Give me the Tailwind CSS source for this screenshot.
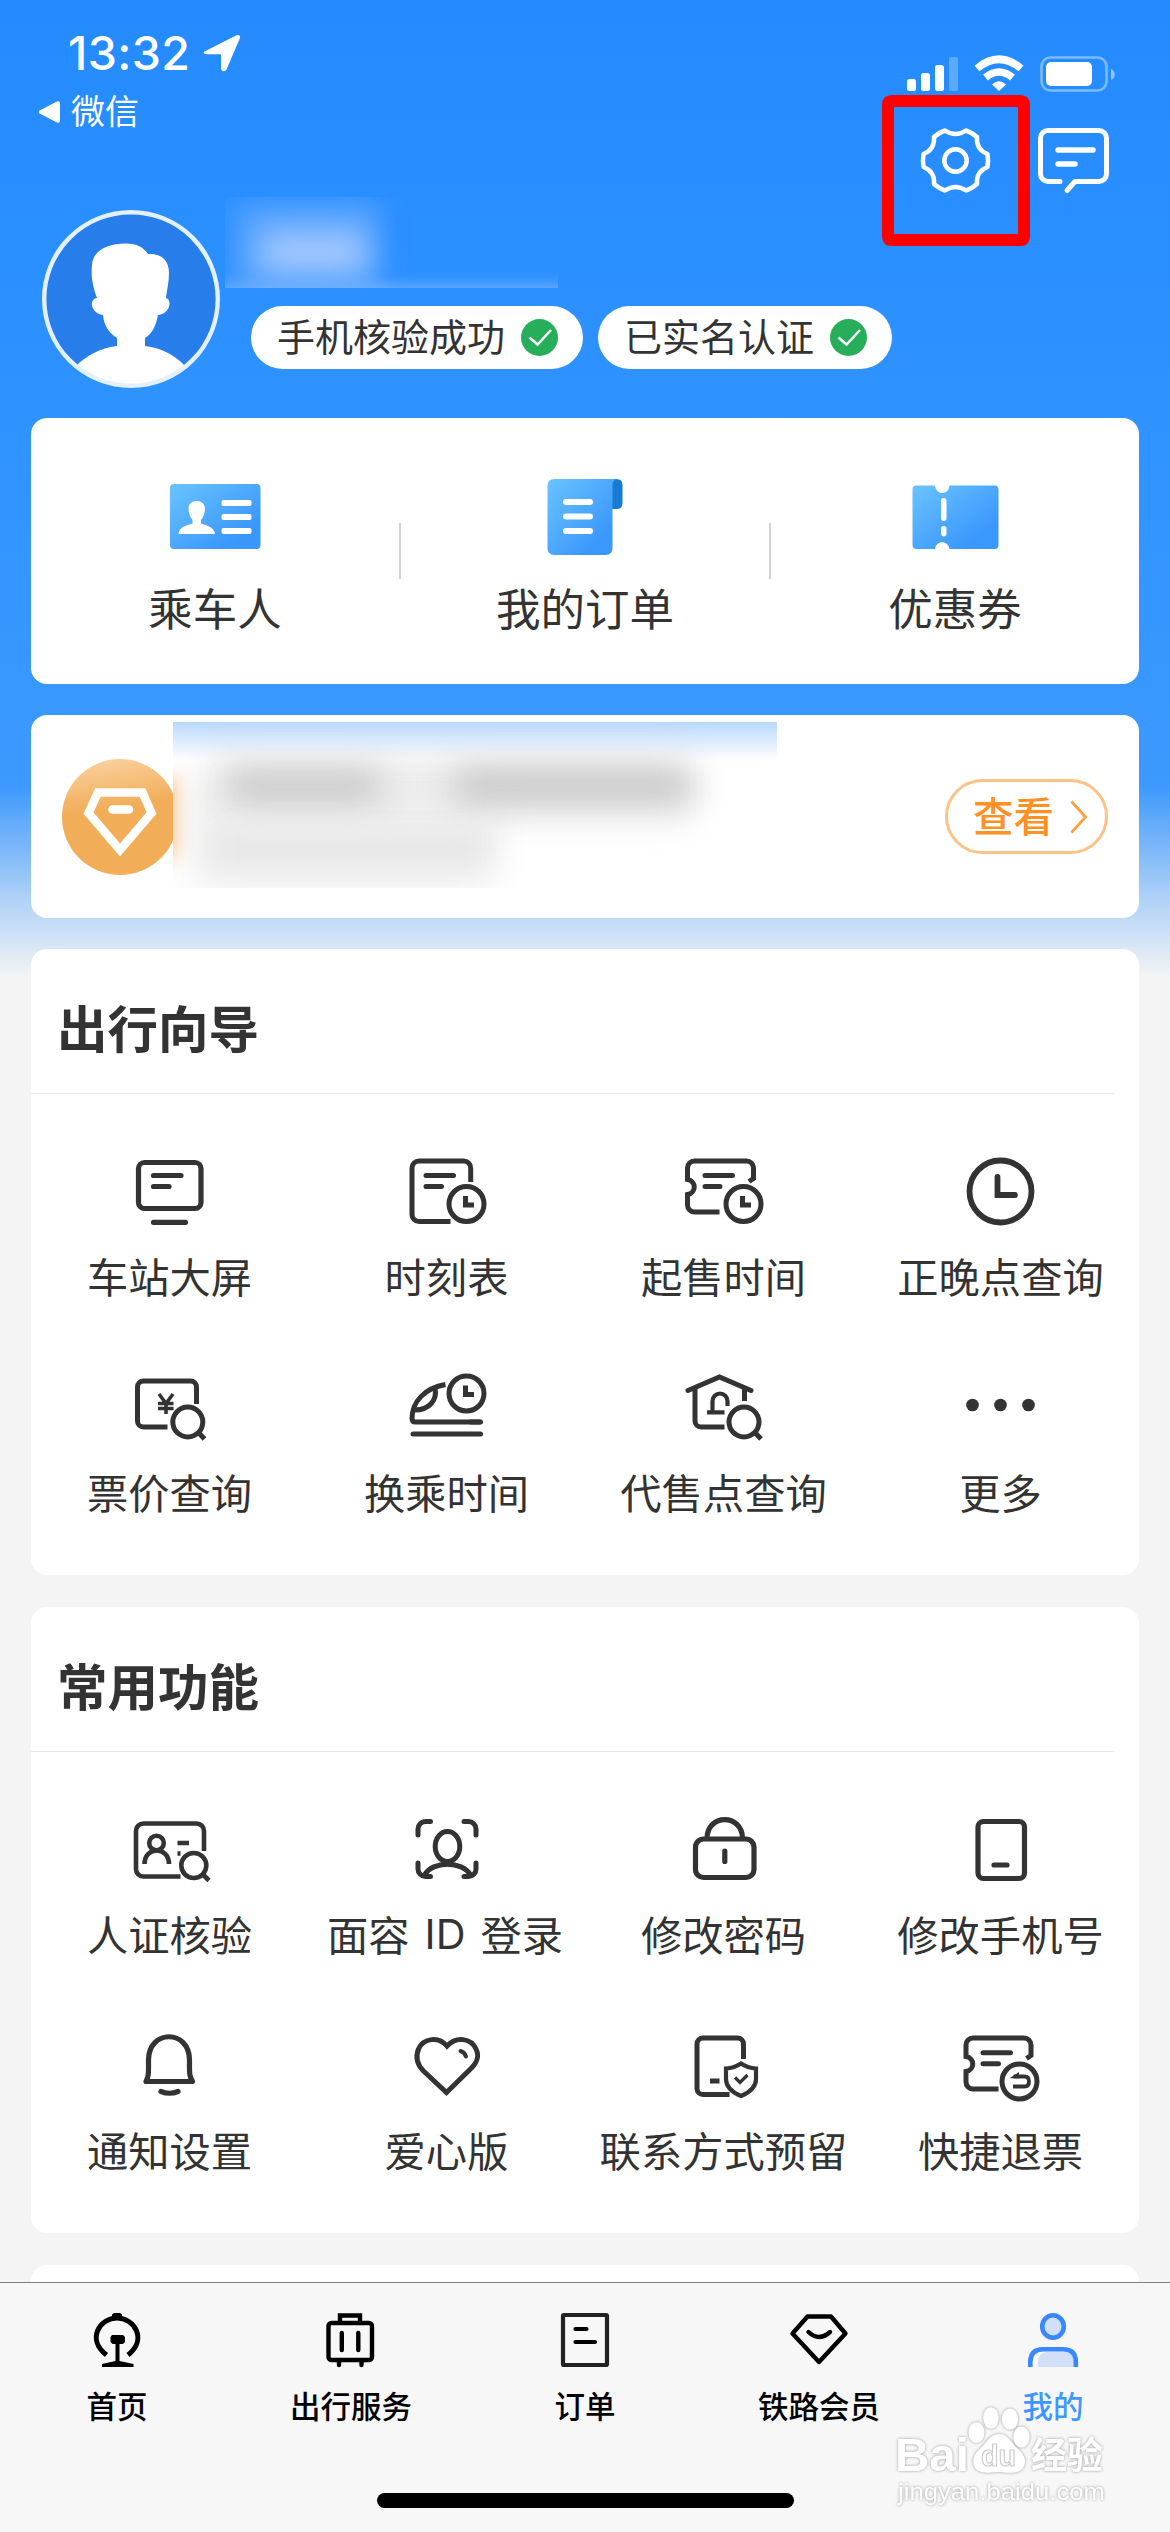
<!DOCTYPE html>
<html lang="zh-CN">
<head>
<meta charset="utf-8">
<title>我的</title>
<script src="https://cdn.jsdelivr.net/npm/@tailwindcss/browser@4"></script>
</head>
<body class="bg-[#f4f4f4]">
<div class="relative w-[1170px] h-[2532px] overflow-hidden flex flex-col bg-[#f4f4f4] text-[#333] font-['Noto_Sans_CJK_SC',sans-serif] bg-[linear-gradient(180deg,#248bff_0px,#2e92ff_400px,#3998ff_700px,#3c99fd_785px,#79b6f9_845px,#b0d2f7_900px,#d8e6f6_946px,#e1eaf4_955px,#f4f4f4_977px)]">

  <!-- status bar -->
  <div class="h-[134px] shrink-0 flex justify-between">
    <div class="pl-[38px] pt-[25px] text-white">
      <div class="flex items-center h-[56px] pl-[30px]">
        <span class="font-['Inter',sans-serif] font-medium text-[46.500px] leading-[56px] w-[135px] tracking-[0.4px]">13:32</span>
        <svg class="w-[38px] h-[38px]" viewBox="0 0 38 38" fill="#fff"><path d="M2.5 17 33.5 1.3c2.2-1 4.3.7 3.3 3.2L23.500 35.500c-1.200 2.700-5.500 2.200-5.500-1.200V21.500c0-.8-.4-1.200-1.200-1.200H3.500c-3.400 0-3.600-2.200-1-3.300z"/></svg>
      </div>
      <div class="flex items-center h-[40px] mt-[11px]">
        <svg class="w-[22px] h-[24px]" viewBox="0 0 22 24" fill="#fff"><path d="M1.500 10.500 19 1.500q3-1 3 2v17q0 3-3 2L1.500 13.500q-1.500-1.500 0-3z"/></svg>
        <span class="text-[34px] leading-[40px] ml-[11px] -mt-[4px]">微信</span>
      </div>
    </div>
    <svg class="w-[220px] h-[50px] mt-[50px] mr-[45px]" viewBox="905 50 220 50" fill="#fff">
      <rect x="907" y="79" width="9" height="12" rx="2.500"/><rect x="921" y="73" width="9" height="18" rx="2.500"/><rect x="935" y="65" width="9" height="26" rx="2.500"/><rect x="949" y="57" width="9" height="34" rx="2.500" opacity=".25"/>
      <g fill="none" stroke="#fff" stroke-width="7.500"><path d="M977 68.500Q999 50 1021 68.500"/><path d="M985.500 77.500Q999 66.500 1012.500 77.500"/></g>
      <path d="M992 84.500q7-6.500 14 0L999 91z"/>
      <rect x="1041.500" y="57.500" width="65" height="33" rx="9" fill="none" stroke="#fff" stroke-width="2.600" opacity=".4"/>
      <rect x="1046" y="62" width="46" height="24" rx="5"/><path d="M1111 69c5 2 5 9 0 11z" opacity=".5"/>
    </svg>
  </div>

  <!-- profile -->
  <div class="h-[284px] shrink-0 flex pl-[42px]">
    <svg class="w-[178px] h-[178px] mt-[76px] shrink-0" viewBox="42 210 178 178">
      <defs><clipPath id="av"><circle cx="131" cy="299" r="87"/></clipPath></defs>
      <circle cx="131" cy="299" r="87" fill="#277de9"/>
      <path clip-path="url(#av)" d="M97 298C92 285 91 275 92 265C93 250 108 243.500 126 243.500C137 243.500 143 247 148 254C160 253.500 169 259 169 273C169 282 167 289 166 298C172 299 171 314 158 315C156 326 152 334 145 338V346C162 348 176 356 185 366C180 384 150 390 131 390S82 384 76 366C86 356 100 348 117 346V338C109 333 104 326 103 315C90 313 89 299 97 298z" fill="#fff"/>
      <circle cx="131" cy="299" r="86.800" fill="none" stroke="#e3f0ff" stroke-width="4.400"/>
    </svg>
    <div class="flex-1 pt-[172px] pl-[31px] flex gap-[15px] items-start">
      <div class="h-[63px] w-[332px] rounded-full bg-white flex items-center pl-[26px]">
        <span class="text-[38px] leading-[54px] -mt-[5px] w-[244px]">手机核验成功</span>
        <svg class="w-[37px] h-[37px]" viewBox="0 0 37 37"><circle cx="18.500" cy="18.500" r="18.500" fill="#27ae5a"/><path d="M8.500 18.500 16.500 25.500 30 11" fill="none" stroke="#fff" stroke-width="2.400"/></svg>
      </div>
      <div class="h-[63px] w-[294px] rounded-full bg-white flex items-center pl-[26px]">
        <span class="text-[38px] leading-[54px] -mt-[5px] w-[206px]">已实名认证</span>
        <svg class="w-[37px] h-[37px]" viewBox="0 0 37 37"><circle cx="18.500" cy="18.500" r="18.500" fill="#27ae5a"/><path d="M8.500 18.500 16.500 25.500 30 11" fill="none" stroke="#fff" stroke-width="2.400"/></svg>
      </div>
    </div>
  </div>

  <!-- settings and message buttons -->
  <svg class="absolute left-[880px] top-[90px] w-[240px] h-[160px]" viewBox="880 90 240 160" fill="none" stroke="#fff" stroke-width="4.500" stroke-linecap="round" stroke-linejoin="round">
    <path d="M892 95H1020q10 0 10 10V236q0 10-10 10H892q-10 0-10-10V105q0-10 10-10zM894 107V234H1018V107z" fill="#f00" fill-rule="evenodd" stroke="none"/>
    <path d="M945 130.500Q955.500 137.500 966 130.500Q972 132.500 977 137Q976 149.500 987.500 154Q988.500 160.500 987.500 167Q976 171.500 977 184Q972 188.500 966 190.500Q955.500 183.500 945 190.500Q939 188.500 934 184Q935 171.500 923.500 167Q922.500 160.500 923.500 154Q935 149.500 934 137Q939 132.500 945 130.500z"/>
    <circle cx="955.500" cy="160.500" r="11.200"/>
    <path d="M1060 181.500H1048a7.500 7.500 0 0 1-7.500-7.500V138a7.500 7.500 0 0 1 7.500-7.500H1099a7.500 7.500 0 0 1 7.500 7.500V174a7.500 7.500 0 0 1-7.500 7.500H1075L1067 190.500" stroke-width="5"/>
    <path d="M1058 150H1093M1058 164H1075" stroke-width="5.500"/>
  </svg>

  <!-- obscured user name -->
  <div class="absolute left-[225px] top-[197px] w-[333px] h-[91px] overflow-hidden">
    <div class="absolute left-[10px] top-[5px] w-[145px] h-[95px] bg-[#6aabff]/70 blur-[14px]"></div>
    <div class="absolute left-[36px] top-[34px] w-[104px] h-[42px] bg-[#a3c8ff] blur-[15px]"></div>
    <div class="absolute left-[-10px] top-[90px] w-[370px] h-[16px] bg-[#7fb6ff] blur-[8px]"></div>
  </div>

  <!-- quick entries -->
  <div class="mx-[31px] h-[266px] shrink-0 rounded-[16px] bg-white flex">
    <div class="flex-1 flex flex-col items-center pt-[56px]">
      <svg class="w-[100px] h-[90px]" viewBox="164.500 474 100 90">
        <defs><linearGradient id="b" x1="0" y1="0" x2="1" y2="1"><stop offset="0" stop-color="#6ac3ff"/><stop offset=".8" stop-color="#3a97fc"/></linearGradient></defs>
        <rect x="169.500" y="484" width="90.500" height="65" rx="4" fill="url(#b)"/>
        <g fill="#fff"><path d="M196 501c12 0 9 14 4.500 19v3.500c6 2 13.500 4 14 10.500H178c0-6.500 7.500-8.500 14-10.500V520c-5-6-7-19 4-19z"/><rect x="221" y="500" width="30" height="6" rx="2"/><rect x="221" y="514" width="30" height="6" rx="2"/><rect x="221" y="528" width="30" height="6" rx="2"/></g>
      </svg>
      <span class="text-[44.500px] leading-[60px] mt-[13px]">乘车人</span>
    </div>
    <div class="w-[2px] h-[56px] mt-[105px] bg-[#d2d2d2]"></div>
    <div class="flex-1 flex flex-col items-center pt-[56px]">
      <svg class="w-[100px] h-[90px]" viewBox="534.500 474 100 90">
        <path d="M604 479H616q6 0 6 6V503q0 6-6 6H604z" fill="#187bd3"/>
        <path d="M554 479H616q-4 1-4 6V548q0 7-7 7H554q-7 0-7-7V486q0-7 7-7z" fill="url(#b)"/>
        <g fill="#fff"><rect x="562.500" y="499" width="30" height="6" rx="3"/><rect x="562.500" y="513.500" width="30" height="6" rx="3"/><rect x="562.500" y="528" width="30" height="6" rx="3"/></g>
      </svg>
      <span class="text-[44.500px] leading-[60px] mt-[13px]">我的订单</span>
    </div>
    <div class="w-[2px] h-[56px] mt-[105px] bg-[#d2d2d2]"></div>
    <div class="flex-1 flex flex-col items-center pt-[56px]">
      <svg class="w-[100px] h-[90px]" viewBox="904.500 474 100 90">
        <path d="M916 485.500H934.500c1 10 13.500 10 14.500 0H994q4 0 4 4V545q0 4-4 4H949c-1-9-13.500-9-14.500 0H916q-4 0-4-4V489.500q0-4 4-4z" fill="url(#b)"/>
        <rect x="940.500" y="498" width="5.500" height="23" rx="2.700" fill="#fff"/><rect x="940.500" y="526" width="5.500" height="10.500" rx="2.700" fill="#fff"/>
      </svg>
      <span class="text-[44.500px] leading-[60px] mt-[13px]">优惠券</span>
    </div>
  </div>

  <!-- membership -->
  <div class="relative mx-[31px] mt-[31px] h-[203px] shrink-0 rounded-[16px] bg-white flex items-center justify-between pl-[31px] pr-[31px]">
    <svg class="w-[116px] h-[116px]" viewBox="62 759 116 116">
      <defs><linearGradient id="o" x1=".4" y1="0" x2=".55" y2="1"><stop offset="0" stop-color="#fad09c"/><stop offset=".42" stop-color="#f1ad58"/></linearGradient></defs>
      <circle cx="120" cy="817" r="58" fill="url(#o)"/>
      <path d="M98 792.500H142.500L151.500 813 120 850 88.500 813z" fill="none" stroke="#fff" stroke-width="8.500"/>
      <path d="M112.500 809.500H129" stroke="#fff" stroke-width="8.500" stroke-linecap="round"/>
    </svg>
    <div class="absolute left-[142px] top-[7px] w-[604px] h-[166px] overflow-hidden bg-white">
      <div class="absolute inset-x-0 top-0 h-[38px] bg-linear-to-b from-[#b9d8ff] to-white"></div>
      <div class="absolute left-[-26px] top-[56px] w-[30px] h-[80px] bg-[#f9c58d] blur-[10px]"></div>
      <div class="absolute left-[30px] top-[36px] w-[490px] h-[60px] bg-[#e4e4e4]/70 blur-[18px]"></div>
      <div class="absolute left-[20px] top-[70px] w-[300px] h-[100px] bg-[#ebebeb]/70 blur-[18px]"></div>
      <div class="absolute left-[56px] top-[48px] w-[150px] h-[32px] bg-[#c8c8c8] blur-[16px]"></div>
      <div class="absolute left-[282px] top-[48px] w-[235px] h-[32px] bg-[#c6c6c6] blur-[16px]"></div>
      <div class="absolute left-[38px] top-[114px] w-[280px] h-[26px] bg-[#e4e4e4] blur-[14px]"></div>
    </div>
    <div class="w-[163px] h-[75px] rounded-full border-[3px] border-[#fdc287] flex items-center pl-[25px] text-[#ff9124]">
      <span class="text-[40.500px] leading-[56px] font-medium -mt-[3px] w-[97px]">查看</span>
      <svg class="w-[18px] h-[34px]" viewBox="0 0 18 34" fill="none" stroke="#ff9f40" stroke-width="2.800"><path d="M1.500 1.500 15.500 17 1.500 32.500"/></svg>
    </div>
  </div>

  <!-- travel guide -->
  <div class="mx-[31px] mt-[31px] h-[626px] shrink-0 rounded-[16px] bg-white">
    <div class="h-[145px] w-[1083px] border-b border-[#e8e8e8] pl-[26px] pt-[41px]"><h2 class="text-[50.500px] leading-[72px] font-bold">出行向导</h2></div>
    <div class="grid grid-cols-4 auto-rows-[216px] pt-[52px] text-[41.300px] leading-[48px] text-center whitespace-nowrap">
      <div class="flex flex-col items-center gap-[15px]">
        <svg class="w-[100px] h-[90px]" viewBox="120.500 1146 100 90" fill="none" stroke="#333" stroke-width="5.200" stroke-linecap="round"><rect x="139" y="1162.500" width="62.500" height="46" rx="6"/><path d="M154 1175.500H181.500M154 1186.500H169.500M154 1222.300H186"/></svg>
        <span>车站大屏</span>
      </div>
      <div class="flex flex-col items-center gap-[15px]">
        <svg class="w-[100px] h-[90px]" viewBox="396.500 1146 100 90" fill="none" stroke="#333" stroke-width="5"><path d="M470.200 1182V1168a7 7 0 0 0-7-7H418.500a7 7 0 0 0-7 7V1214.500a7 7 0 0 0 7 7H450"/><path stroke-linecap="round" d="M425.500 1175.500H453M425.500 1186.500H441"/><circle cx="466" cy="1204" r="17.500"/><path d="M465 1196V1205H473.500"/></svg>
        <span>时刻表</span>
      </div>
      <div class="flex flex-col items-center gap-[15px]">
        <svg class="w-[100px] h-[90px]" viewBox="673.500 1146 100 90" fill="none" stroke="#333" stroke-width="5"><path d="M748.500 1181.500 753 1178.500V1168a7 7 0 0 0-7-7H694a7 7 0 0 0-7 7V1179.500C696 1181 696 1193 687 1194.500V1205a7 7 0 0 0 7 7H719"/><path stroke-linecap="round" d="M704.500 1175.500H732M704.500 1186.500H719.500"/><circle cx="743" cy="1204" r="17.500"/><path d="M742 1196V1205H750.500"/></svg>
        <span>起售时间</span>
      </div>
      <div class="flex flex-col items-center gap-[15px]">
        <svg class="w-[100px] h-[90px]" viewBox="950.500 1146 100 90" fill="none" stroke="#333" stroke-width="5.800"><circle cx="1000" cy="1191.500" r="31"/><path stroke-linecap="round" d="M997 1177V1195H1014.500"/></svg>
        <span>正晚点查询</span>
      </div>
      <div class="flex flex-col items-center gap-[15px]">
        <svg class="w-[100px] h-[90px]" viewBox="119.500 1362 100 90" fill="none" stroke="#333" stroke-width="5"><path d="M196 1404V1387a6 6 0 0 0-6-6H143a6 6 0 0 0-6 6V1421a6 6 0 0 0 6 6H167"/><path stroke-width="3.600" d="M158.500 1394 165.500 1403.500 172.500 1394M165.500 1403V1414M157.500 1403.500H173M157.500 1408.500H173"/><circle cx="187.300" cy="1422" r="15"/><path d="M197.500 1432 204 1439"/></svg>
        <span>票价查询</span>
      </div>
      <div class="flex flex-col items-center gap-[15px]">
        <svg class="w-[100px] h-[90px]" viewBox="396.500 1362 100 90" fill="none" stroke="#333" stroke-width="5"><path d="M445 1384.500C424 1388 411.500 1402 411.500 1418.500Q411.500 1422 415 1422H480"/><path d="M434.500 1388C437 1400 429 1410 414 1410"/><path stroke-linecap="round" d="M412.500 1434H480M470 1422H480"/><circle cx="466" cy="1393.500" r="17.500"/><path d="M465 1385.500V1394.500H473.500"/></svg>
        <span>换乘时间</span>
      </div>
      <div class="flex flex-col items-center gap-[15px]">
        <svg class="w-[100px] h-[90px]" viewBox="673.500 1362 100 90" fill="none" stroke="#333" stroke-width="5"><path stroke-linecap="round" d="M687.500 1390.500 719 1377 750.500 1390.500"/><path d="M694.500 1388V1421a6 6 0 0 0 6 6H724M744 1388V1401"/><path stroke-width="4.200" d="M712 1411V1401a7.500 7.500 0 0 1 15 0V1406M706.500 1412.300H724"/><circle cx="743.500" cy="1422" r="15"/><path d="M754 1432 760.500 1439"/></svg>
        <span>代售点查询</span>
      </div>
      <div class="flex flex-col items-center gap-[15px]">
        <svg class="w-[100px] h-[90px]" viewBox="950.500 1362 100 90" fill="#333"><circle cx="972" cy="1405" r="6.300"/><circle cx="1000" cy="1405" r="6.300"/><circle cx="1028" cy="1405" r="6.300"/></svg>
        <span>更多</span>
      </div>
    </div>
  </div>

  <!-- common functions -->
  <div class="mx-[31px] mt-[32px] h-[626px] shrink-0 rounded-[16px] bg-white">
    <div class="h-[145px] w-[1083px] border-b border-[#e8e8e8] pl-[26px] pt-[41px]"><h2 class="text-[50.500px] leading-[72px] font-bold">常用功能</h2></div>
    <div class="grid grid-cols-4 auto-rows-[216px] pt-[52px] text-[41.300px] leading-[48px] text-center whitespace-nowrap">
      <div class="flex flex-col items-center gap-[15px]">
        <svg class="w-[100px] h-[90px]" viewBox="119.500 1804 100 90" fill="none" stroke="#333" stroke-width="4.600"><path d="M203.500 1851V1831a7.500 7.500 0 0 0-7.500-7.500H143a7.500 7.500 0 0 0-7.500 7.500V1869a7.500 7.500 0 0 0 7.500 7.500H180"/><circle cx="156" cy="1843" r="7.300"/><path d="M144 1864C144 1846 168.500 1846 168.500 1864M177 1843H188.500M177 1853.500H180"/><circle cx="193.300" cy="1865.500" r="12.500"/><path d="M202 1874 208.500 1880.500"/></svg>
        <span>人证核验</span>
      </div>
      <div class="flex flex-col items-center gap-[15px]">
        <svg class="w-[100px] h-[90px]" viewBox="396.500 1804 100 90" fill="none" stroke="#333" stroke-width="5" stroke-linecap="round"><path d="M417.500 1835V1829a7.500 7.500 0 0 1 7.500-7.500H430M463.500 1821.500H468a7.500 7.500 0 0 1 7.500 7.500V1835M475.500 1863V1869a7.500 7.500 0 0 1-7.500 7.500H463.500M430 1876.500H425a7.500 7.500 0 0 1-7.500-7.500V1863"/><ellipse cx="447" cy="1846.500" rx="12.300" ry="15"/><path d="M424 1875C432 1860.500 462 1860.500 470 1875"/></svg>
        <div class="h-[48px] flex gap-[15px] -ml-[3px]"><span>面容</span><span class="font-['Inter',sans-serif] pt-px">ID</span><span>登录</span></div>
      </div>
      <div class="flex flex-col items-center gap-[15px]">
        <svg class="w-[100px] h-[90px]" viewBox="673.500 1804 100 90" fill="none" stroke="#333" stroke-width="5.200"><rect x="695" y="1839" width="58.500" height="38.500" rx="8"/><path d="M706.500 1838C707 1813.500 741.500 1813.500 742 1838"/><path stroke-linecap="round" d="M724.300 1851V1861.500"/></svg>
        <span>修改密码</span>
      </div>
      <div class="flex flex-col items-center gap-[15px]">
        <svg class="w-[100px] h-[90px]" viewBox="950.500 1804 100 90" fill="none" stroke="#333" stroke-width="5.200"><rect x="977.500" y="1821.500" width="46.500" height="57" rx="5.500"/><path stroke-linecap="round" d="M993.500 1865H1006.500"/></svg>
        <span>修改手机号</span>
      </div>
      <div class="flex flex-col items-center gap-[15px]">
        <svg class="w-[100px] h-[90px]" viewBox="119.500 2020 100 90" fill="none" stroke="#333" stroke-width="5.200" stroke-linejoin="round"><path d="M145.500 2081.500C148.500 2076 148 2072 148 2060C148 2029 189 2029 189 2060C189 2072 188.500 2076 192 2081.500z"/><path stroke-linecap="round" d="M160.500 2091.500Q169 2095 177.500 2091.500"/></svg>
        <span>通知设置</span>
      </div>
      <div class="flex flex-col items-center gap-[15px]">
        <svg class="w-[100px] h-[90px]" viewBox="396.500 2020 100 90" fill="none" stroke="#333" stroke-width="5"><path d="M446.500 2046C438 2036 423 2038 418 2049C414.500 2058 417 2065 423 2071L446 2092.500 470 2069C476 2063 479.500 2057 475.500 2049C470.500 2038 456 2036 446.500 2046z"/><path stroke-linecap="round" stroke-width="4" d="M460 2051Q464 2052 465.500 2056.500"/></svg>
        <span>爱心版</span>
      </div>
      <div class="flex flex-col items-center gap-[15px]">
        <svg class="w-[100px] h-[90px]" viewBox="673.500 2020 100 90" fill="none" stroke="#333" stroke-width="5"><path d="M743 2059V2044a6 6 0 0 0-6-6H702.500a6 6 0 0 0-6 6V2088.500a6 6 0 0 0 6 6H729M709.500 2081H719"/><path stroke-width="4.200" d="M740.500 2063.500Q747 2068 755.500 2068.500V2079C755.500 2087 749 2092.500 740.500 2096C732 2092.500 725.500 2087 725.500 2079V2068.500Q734 2068 740.500 2063.500z"/><path stroke-width="3.200" d="M734.500 2077.500 739.500 2082.500 747 2075"/></svg>
        <span>联系方式预留</span>
      </div>
      <div class="flex flex-col items-center gap-[15px]">
        <svg class="w-[100px] h-[90px]" viewBox="950.500 2020 100 90" fill="none" stroke="#333" stroke-width="5"><path d="M1026 2058.500 1030.500 2055.500V2045a7 7 0 0 0-7-7H972.500a7 7 0 0 0-7 7V2056.500C974.500 2058 974.500 2070 965.500 2071.500V2082a7 7 0 0 0 7 7H998"/><path stroke-linecap="round" d="M982.500 2052.700H1010M982.500 2063.700H998"/><circle cx="1019" cy="2081.500" r="17.500"/><path stroke-width="3.800" d="M1012.500 2086.500H1024Q1028.500 2086.500 1028.500 2081.500T1024 2076.500H1013"/><path d="M1009 2078.200 1018.500 2072V2078.200z" fill="#333" stroke="none"/></svg>
        <span>快捷退票</span>
      </div>
    </div>
  </div>

  <div class="mx-[31px] mt-[32px] h-[17px] shrink-0 rounded-t-[16px] bg-white"></div>

  <!-- tab bar -->
  <div class="h-[250px] shrink-0 border-t border-[#7f7f7f] bg-[#f7f7f7] flex flex-col">
    <div class="grid grid-cols-5 pt-[27px] text-[30.500px] leading-[44px] font-medium text-black text-center">
      <div class="flex flex-col items-center gap-[13px]">
        <svg class="w-[60px] h-[60px]" viewBox="87 2310 60 60" fill="none" stroke="#000" stroke-width="5"><path d="M106.500 2355C86 2339 100 2318 117 2318S148 2339 128 2355"/><path d="M112 2319V2314.500L114 2313H120L122 2314.500V2319zM112 2335H123L125 2337V2342L123 2344H119.500V2361L133.500 2364V2367H102V2364L115.500 2361V2344H112.500L110.500 2342V2337z" fill="#000" stroke="none"/></svg>
        <span>首页</span>
      </div>
      <div class="flex flex-col items-center gap-[13px]">
        <svg class="w-[60px] h-[60px]" viewBox="321 2310 60 60" fill="none" stroke="#000" stroke-width="4.400"><rect x="328.500" y="2323" width="43.500" height="37" rx="3"/><path d="M340 2322V2315.500H360V2322"/><path stroke-linecap="round" d="M341.800 2333V2350M358.300 2333V2350M339 2361V2365M361.500 2361V2365"/></svg>
        <span>出行服务</span>
      </div>
      <div class="flex flex-col items-center gap-[13px]">
        <svg class="w-[60px] h-[60px]" viewBox="555 2310 60 60" fill="none" stroke="#222" stroke-width="4.200"><rect x="563" y="2315" width="44" height="50" rx="1"/><path stroke="#000" stroke-linecap="round" d="M575.500 2329H586.500M575.500 2342H595"/></svg>
        <span>订单</span>
      </div>
      <div class="flex flex-col items-center gap-[13px]">
        <svg class="w-[60px] h-[60px]" viewBox="788 2310 60 60" fill="none" stroke="#000" stroke-width="4.400" stroke-linejoin="round"><path d="M806.500 2316.500H830L844.500 2333.500 818 2362 791.500 2333.500z"/><path stroke-linecap="round" d="M807.500 2332Q818 2342 829 2332"/></svg>
        <span>铁路会员</span>
      </div>
      <div class="flex flex-col items-center gap-[13px] text-[#3c98ff]">
        <svg class="w-[60px] h-[60px]" viewBox="1023 2310 60 60" fill="#d1dff8"><ellipse cx="1053" cy="2326.500" rx="10.800" ry="11.200" stroke="#3a88ff" stroke-width="4.600"/><path d="M1038 2367V2362Q1038 2352 1048 2352H1067Q1074 2354 1075 2362V2367z"/><path d="M1030.300 2367V2362Q1030.300 2349.200 1043 2349.200H1063Q1075.800 2349.200 1075.800 2362V2367" fill="none" stroke="#3a88ff" stroke-width="4.600"/></svg>
        <span>我的</span>
      </div>
    </div>
    <div class="self-center w-[417px] h-[15px] mt-[66px] rounded-full bg-black"></div>
  </div>

  <!-- watermark -->
  <svg class="absolute left-[885px] top-[2400px] w-[240px] h-[115px] [filter:drop-shadow(0_0_1.500px_#999)]" viewBox="885 2400 240 115" fill="#fff">
    <text x="895" y="2471" font-family="Liberation Sans, sans-serif" font-weight="bold" font-size="47" textLength="74" lengthAdjust="spacingAndGlyphs">Bai</text>
    <ellipse cx="976.500" cy="2432.500" rx="8" ry="10.500"/><ellipse cx="991" cy="2418" rx="7.800" ry="10.800"/><ellipse cx="1010" cy="2419" rx="8.200" ry="10.500"/><ellipse cx="1021.500" cy="2437" rx="8.200" ry="10.500"/>
    <path d="M999 2434C1007 2434 1011 2442 1017 2448C1024 2454 1027 2460 1024 2466C1020 2476 1006 2472 999 2472S976 2476 973.500 2464C972 2456 978 2450 983 2446C988 2440 991 2434 999 2434z"/>
    <text x="981" y="2466" font-family="Liberation Sans, sans-serif" font-size="29" fill="#fff" stroke="#ccc" stroke-width="1.200" font-weight="bold" textLength="35" lengthAdjust="spacingAndGlyphs">du</text>
    <text x="1031" y="2469" font-family="Noto Sans CJK SC, sans-serif" font-weight="bold" font-size="37" textLength="72" lengthAdjust="spacingAndGlyphs">经验</text>
    <text x="898" y="2500" font-family="Liberation Sans, sans-serif" font-size="24" textLength="207" lengthAdjust="spacingAndGlyphs">jingyan.baidu.com</text>
  </svg>
</div>
</body>
</html>
